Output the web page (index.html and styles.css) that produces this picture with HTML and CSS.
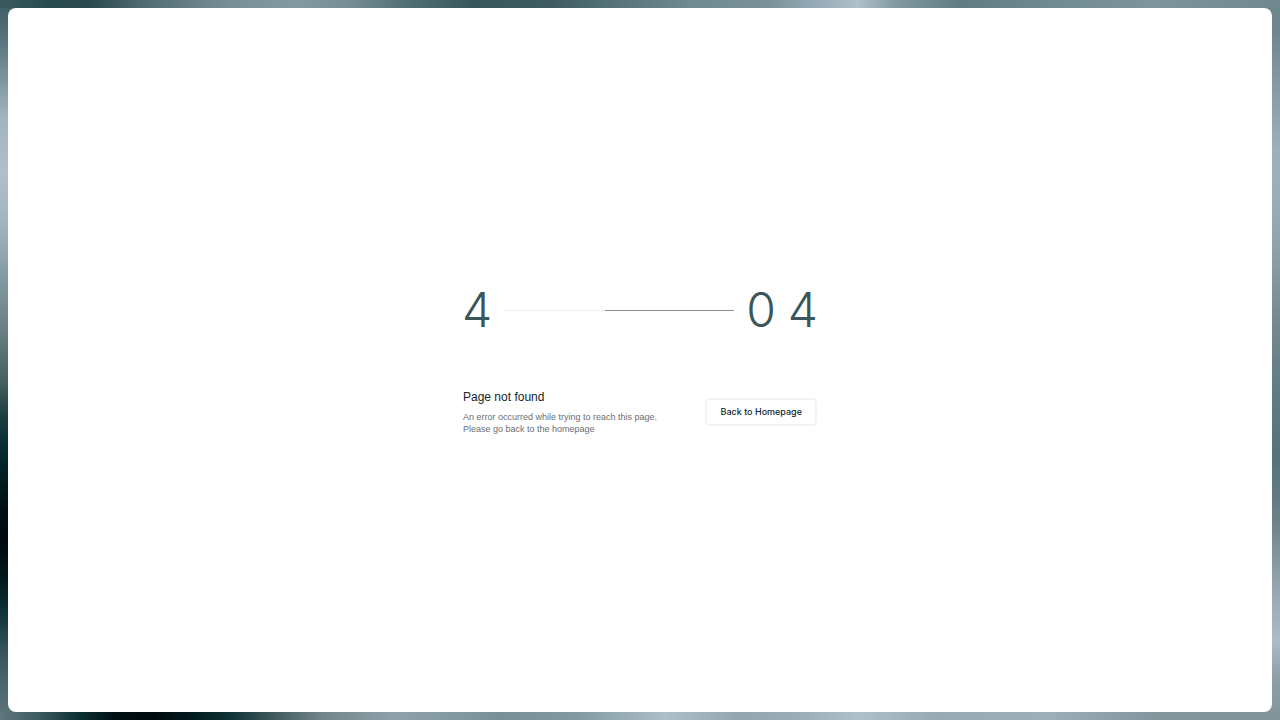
FILE: index.html
```
<!DOCTYPE html>
<html lang="en">

    <head>
        <meta charset="UTF-8">
        <meta name="viewport" content="width=device-width, initial-scale=1.0">
        <title>Page not found</title>
        <link rel="stylesheet" href="styles.css">
    </head>

    <body>
        <main class="panel">
            <div class="content">
                <h1 class="code" aria-label="404">
                    <span>4</span>
                    <span class="line"></span>
                    <span>0</span>
                    <span>4</span>
                </h1>
                <div class="info">
                    <div class="text">
                        <h2 class="title">Page not found</h2>
                        <p class="desc">
                            An error occurred while trying to reach this page.
                            <br>
                            Please go back to the homepage
                        </p>
                    </div>
                    <a href="/" class="home">Back to Homepage</a>
                </div>
            </div>
        </main>
    </body>

</html>
```
FILE: styles.css
```
* {
    box-sizing: border-box;
}

body {
    margin: 0;
    min-height: 100vh;
    padding: 8px;
    display: flex;
    font-family: "Liberation Sans", Arial, sans-serif;
    /* one gradient strip per edge: top, bottom, left, right */
    background-color: #6f878d;
    background-image:
        linear-gradient(to right, #3a5a60, #264b4c 4%, #2a4850 7%, #50696f 11%, #788f97 18%, #8299a2 23%, #788f95 27%, #4f6d73 32%, #38565b 37%, #3e5b60 43%, #56727a 48%, #708a90 54%, #7a9199 60%, #97acb7 64%, #b0c0cb 67%, #8299a2 70%, #607b81 75%, #708a90 82%, #7f949d 90%, #6f878d),
        linear-gradient(to right, #5f777d, #3d5b61 3%, #0f3336 6%, #001015 9%, #000a0c 12%, #021a1e 15%, #0f3336 18%, #3b5559 21%, #728488 25%, #8fa2ac 31%, #7a9098 39%, #8299a2 45%, #adbfca 52%, #92a6ae 58%, #9db0b9 63%, #b0c0cb 67%, #97abb5 73%, #9db0b9 82%, #82969d 90%, #7f9499),
        linear-gradient(#3a5a60, #5a7680 6%, #a0b3be 16%, #b0c0cb 24%, #a0b4bf 31%, #8aa0a8 37%, #687e83 46%, #45605f 53%, #1a3c3f 58%, #02262b 64%, #001010 71%, #000a0c 75%, #00161a 80%, #0f3336 85%, #395760 91%, #5f777d),
        linear-gradient(#6f878d, #6b868c 4%, #8195a0 10%, #9db0bb 21%, #9aafb8 27%, #8a9fa5 36%, #74898e 45%, #5f7b83 54%, #56737c 64%, #6a8187 72%, #8fa1a9 80%, #adbcc8 89%, #8d9fa7 94%, #7f9499);
    background-position: top, bottom, left, right;
    background-size: 100% 8px, 100% 8px, 20px 100%, 20px 100%;
    background-repeat: no-repeat;
}

.panel {
    flex: 1;
    display: flex;
    justify-content: center;
    align-items: center;
    background: #fff;
    border-radius: 8px;
}

.content {
    width: 356px;
}

.code {
    margin: 0 0 54px;
    display: flex;
    align-items: center;
    gap: 12px;
    font-family: Inter, sans-serif;
    font-size: 48px;
    font-weight: 350;
    line-height: 50px;
    color: #3a565b;
}

.line {
    flex: 1;
    height: 1px;
    background: linear-gradient(to right, #eee 44%, #909090 44%);
}

.info {
    padding: 0 1px;
    display: flex;
    justify-content: space-between;
    align-items: center;
}

.title {
    margin: 0 0 6px;
    font-size: 12px;
    font-weight: 400;
    line-height: 16px;
    color: #14262b;
}

.desc {
    margin: 0;
    font-size: 9px;
    line-height: 12px;
    color: #6b6e70;
}

.home {
    padding: 6px 13px;
    border: 2px solid #f3f4f4;
    border-radius: 4px;
    font-family: Inter, sans-serif;
    font-size: 9px;
    font-weight: 500;
    line-height: 12px;
    color: #14262b;
    text-decoration: none;
}
```
